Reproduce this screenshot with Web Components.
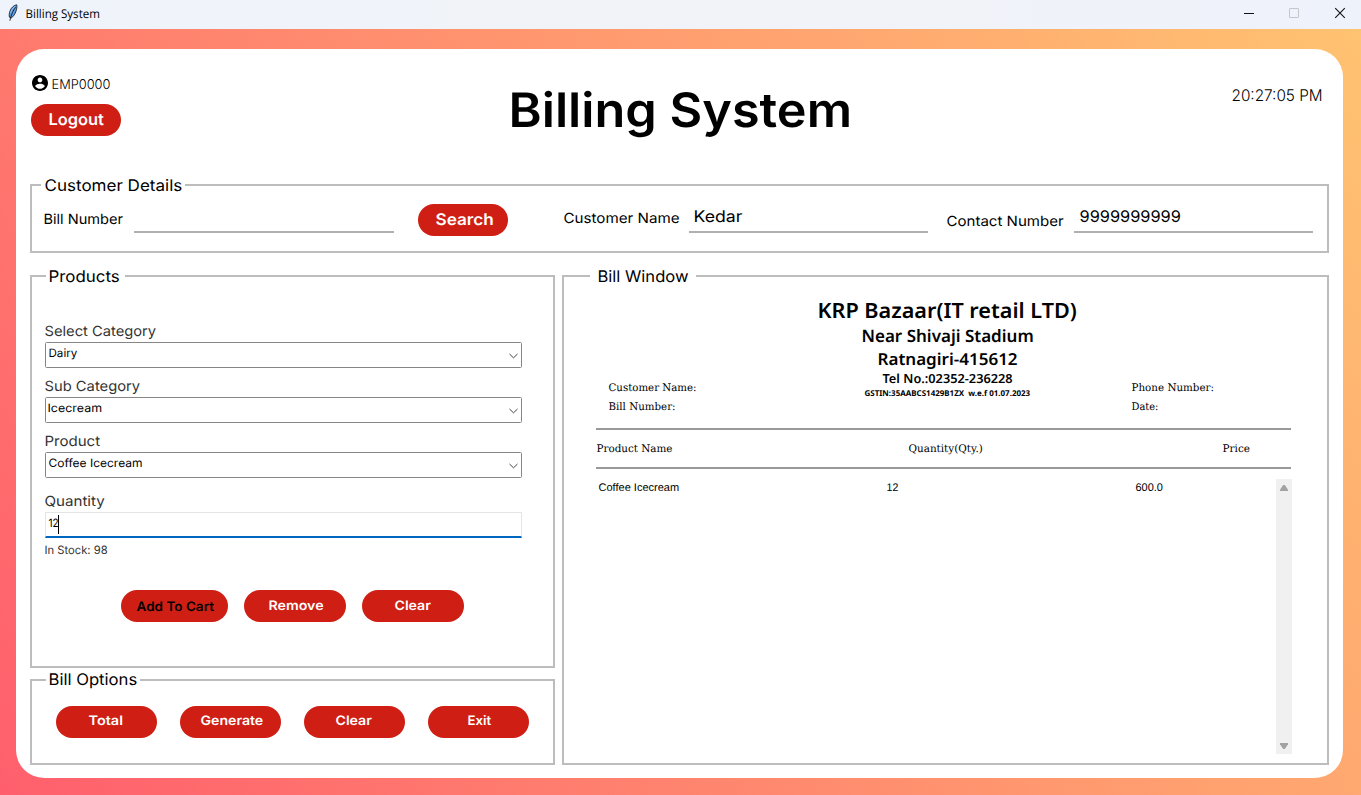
<!DOCTYPE html>
<html lang="en">
<head>
<meta charset="utf-8">
<title>Billing System</title>
<style>
html,body{margin:0;padding:0;width:1361px;height:795px;overflow:hidden;font-family:Inter,"Open Sans",sans-serif;color:#000}
</style>
</head>
<body>
<app-window></app-window>
<script>
const ctx = document.createElement('canvas').getContext('2d');
const FONTS = {
  ui: 'Inter, "Open Sans", sans-serif',
  system: '"Open Sans", sans-serif',
  print: '"Noto Sans", sans-serif',
  slab: '"DejaVu Serif", serif',
  arial: '"Liberation Sans", sans-serif'
};
const LOWERED = [8, 11, 13, 13.5, 14, 21, 47.5];

function shadow(el, html) {
  el.attachShadow({ mode: 'open' }).innerHTML = html;
}

/* A single line of text, stretched to fill the width given in "w". */
class FitLabel extends HTMLElement {
  connectedCallback() {
    if (this.shadowRoot) return;
    const get = (k, d) => this.getAttribute(k) || d;
    const w = +get('w', 100), size = +get('size', 14), weight = get('weight', '400');
    const lh = get('lh', '20'), family = FONTS[get('face', 'ui')];
    const text = this.textContent;
    ctx.font = `${weight} ${size * 10}px ${family}`;
    const m = ctx.measureText(text);
    const left = m.actualBoundingBoxLeft / 10;
    const scale = (w - .5) / (left + m.actualBoundingBoxRight / 10);
    const dy = LOWERED.includes(size) ? 1 : 0;
    shadow(this, `<style>
      :host{display:block;flex:none;width:${w}px;height:${lh}px;
        font:${weight} ${size}px/${lh}px ${family};white-space:pre;text-rendering:geometricPrecision}
      span{display:block;width:max-content;margin-left:${(left * scale).toFixed(2)}px;
        transform:translate(.5px,${dy}px) scaleX(${scale.toFixed(4)});transform-origin:0 0}
    </style><span><slot></slot></span>`);
  }
}

class PillButton extends HTMLElement {
  connectedCallback() {
    if (this.shadowRoot) return;
    shadow(this, `<style>
      :host{display:block;flex:none;box-sizing:border-box;width:${this.getAttribute('width')}px;height:32px;
        border-radius:16px;background:#cf1f15;color:#fff;
        padding:${this.getAttribute('ty')}px 0 0 ${this.getAttribute('tx')}px;cursor:pointer}
    </style><slot></slot>`);
  }
}

class GroupBox extends HTMLElement {
  connectedCallback() {
    if (this.shadowRoot) return;
    shadow(this, `<style>
      :host{display:block;flex:none;box-sizing:border-box;border:2px solid #bdbdbd}
      .legend{box-sizing:border-box;height:20px;background:#fff;width:var(--gap);
        margin:var(--rise,-11px) 0 0 var(--start);padding-left:var(--inset)}
    </style><div class="legend"><slot name="legend"></slot></div><slot></slot>`);
  }
}

class LineField extends HTMLElement {
  connectedCallback() {
    if (this.shadowRoot) return;
    shadow(this, `<style>
      :host{display:block;flex:none;box-sizing:border-box;height:37px;border-bottom:2px solid #b0b0b0;padding:10px 0 0 5.5px}
    </style><slot></slot>`);
  }
}

class ComboBox extends HTMLElement {
  connectedCallback() {
    if (this.shadowRoot) return;
    shadow(this, `<style>
      :host{display:flex;justify-content:space-between;box-sizing:border-box;width:477px;height:26px;
        border:1px solid #868686;border-radius:1.5px;padding:0 3.5px 0 2.5px}
      svg{display:block;margin-top:10px}
    </style><slot></slot>
    <svg width="9" height="6" viewBox="0 0 9 6"><path d="M.5 1 4.500 4.800 8.500 1" fill="none" stroke="#444" stroke-width="1"/></svg>`);
  }
}

class QuantityEntry extends HTMLElement {
  connectedCallback() {
    if (this.shadowRoot) return;
    shadow(this, `<style>
      :host{display:flex;box-sizing:border-box;width:477px;height:26px;border:1px solid #e5e5e5;
        border-bottom:2px solid #0067c0;padding-left:2.5px}
      i{display:block;width:1px;height:19px;background:#000;margin:2px 0 0}
    </style><slot></slot><i></i>`);
  }
}

class TitleBar extends HTMLElement {
  connectedCallback() {
    if (this.shadowRoot) return;
    shadow(this, `<style>
      :host{display:flex;height:29px;background:linear-gradient(90deg,#eff3fb,#f1f3f8 45%,#f1f3f8 65%,#eef2fb);box-sizing:border-box}
      .feather{margin:4px 0 0 7px}
      fit-label{margin:4px 0 0 8.500px}
      .controls{display:flex;margin:7px 15px 0 auto;gap:33px}
      .controls .max{margin-right:1px}
      svg{display:block}
    </style>
    <svg class="feather" width="11" height="18" viewBox="0 0 11 18">
      <path d="M9.700.8C7.200 1 4.200 3.600 3 7c-.9 2.600-1 4.700-.5 6.300L4.200 14C6.200 12.800 8.100 10 9 7.200 9.700 5 10.200 2.500 9.700.8Z" fill="#5b9be0" stroke="#17222f" stroke-width=".9"/>
      <path d="M8.200 2.200C6 3.600 4.200 6.200 3.500 9" fill="none" stroke="#a9cdf3" stroke-width=".8"/>
      <path d="M8.600 3.200C6.200 6.500 4.400 10 2.900 16.700" fill="none" stroke="#0d1520" stroke-width=".9"/>
    </svg>
    <fit-label face="system" size="12" w="73">Billing System</fit-label>
    <div class="controls">
      <svg width="12" height="12"><path d="M1 6.500H11" stroke="#111"/></svg>
      <svg class="max" width="12" height="12"><rect x="1.500" y="1.500" width="9" height="9" rx=".5" fill="none" stroke="#c3c6cb"/></svg>
      <svg width="12" height="12"><path d="M1.200 1.200 10.800 10.800M10.800 1.200 1.200 10.800" stroke="#111" stroke-width="1.100"/></svg>
    </div>`);
  }
}

class PageHeader extends HTMLElement {
  connectedCallback() {
    if (this.shadowRoot) return;
    shadow(this, `<style>
      :host{display:flex;height:135px}
      .account{width:495px}
      .user{display:flex;height:16px;margin:26px 0 13px 16px}
      .user fit-label{margin:-1px 0 0 4.500px}
      .title{margin-top:31px}
      .clock{margin:36px 0 0 383px}
      pill-button{margin-left:15px}
    </style>
    <div class="account">
      <div class="user">
        <svg width="16" height="16" viewBox="2 2 20 20"><path d="M12 2C6.480 2 2 6.480 2 12s4.480 10 10 10 10-4.480 10-10S17.520 2 12 2zm0 3.200c1.660 0 2.900 1.240 2.900 2.900s-1.240 2.900-2.900 2.900-2.900-1.240-2.900-2.900 1.240-2.900 2.900-2.900zm0 14.100c-2.500 0-4.710-1.280-6-3.220.03-1.990 4-3.080 6-3.080 1.990 0 5.970 1.090 6 3.080-1.290 1.940-3.500 3.220-6 3.220z"/></svg>
        <fit-label size="13.500" weight="350" w="57.500">EMP0000</fit-label>
      </div>
      <pill-button width="90" tx="18.500" ty="5"><fit-label size="16" weight="600" w="54.500">Logout</fit-label></pill-button>
    </div>
    <fit-label class="title" size="47.500" weight="600" w="338" lh="60">Billing System</fit-label>
    <fit-label class="clock" size="16" weight="300" w="89">20:27:05 PM</fit-label>`);
  }
}

class CustomerDetails extends HTMLElement {
  connectedCallback() {
    if (this.shadowRoot) return;
    shadow(this, `<style>
      :host{display:block;margin:0 14px}
      group-box{height:69px;--start:9px;--gap:144px;--inset:3.500px}
      .row{display:flex;align-items:flex-start;padding-top:1px}
    </style>
    <group-box>
      <fit-label slot="legend" size="16" w="136.500">Customer Details</fit-label>
      <div class="row">
        <fit-label size="14" w="78.500" style="margin:13px 0 0 12.500px">Bill Number</fit-label>
        <line-field style="width:260px;margin-left:11px"></line-field>
        <pill-button width="90" tx="18" ty="5" style="margin:8px 0 0 24px"><fit-label size="16" weight="600" w="57">Search</fit-label></pill-button>
        <fit-label size="14" w="115" style="margin:12px 0 0 55.500px">Customer Name</fit-label>
        <line-field style="width:239px;margin-left:10.500px"><fit-label size="16" w="47.500">Kedar</fit-label></line-field>
        <fit-label size="14" w="116.500" style="margin:15px 0 0 19px">Contact Number</fit-label>
        <line-field style="width:239px;margin-left:10.500px"><fit-label size="16" w="100">9999999999</fit-label></line-field>
      </div>
    </group-box>`);
  }
}

class ProductsPanel extends HTMLElement {
  connectedCallback() {
    if (this.shadowRoot) return;
    shadow(this, `<style>
      :host{display:block}
      group-box{height:393px;--start:14px;--gap:79px;--inset:3px}
      .form{padding:35px 0 0 13px}
      .name{color:#333;margin-bottom:1px}
      .name ~ .name{margin-top:8px}
      .form > .qty.name{margin-top:13px}
      .stock{color:#333;margin-top:2px}
      .actions{display:flex;gap:16px;margin:30px 0 0 76px}
      .dark{color:#000}
    </style>
    <group-box>
      <fit-label slot="legend" size="16" w="69.500">Products</fit-label>
      <div class="form">
        <fit-label class="name" size="14" w="111">Select Category</fit-label>
        <combo-box><fit-label size="11.500" w="28">Dairy</fit-label></combo-box>
        <fit-label class="name" size="14" w="95">Sub Category</fit-label>
        <combo-box><fit-label size="11.500" w="53">Icecream</fit-label></combo-box>
        <fit-label class="name" size="14" w="54.500">Product</fit-label>
        <combo-box><fit-label size="11.500" w="93">Coffee Icecream</fit-label></combo-box>
        <fit-label class="name qty" size="14" w="59.500">Quantity</fit-label>
        <quantity-entry><fit-label size="11.500" w="9.500">12</fit-label></quantity-entry>
        <fit-label class="stock" size="11.500" w="62">In Stock: 98</fit-label>
        <div class="actions">
          <pill-button width="107" tx="15.500" ty="6"><fit-label class="dark" size="13" weight="600" w="77.500">Add To Cart</fit-label></pill-button>
          <pill-button width="102" tx="25" ty="5"><fit-label size="13" weight="600" w="54">Remove</fit-label></pill-button>
          <pill-button width="102" tx="33" ty="5"><fit-label size="13" weight="600" w="36">Clear</fit-label></pill-button>
        </div>
      </div>
    </group-box>`);
  }
}

class BillOptions extends HTMLElement {
  connectedCallback() {
    if (this.shadowRoot) return;
    shadow(this, `<style>
      :host{display:block;margin-top:11px}
      group-box{height:86px;--start:14px;--gap:94px;--inset:3.500px;--rise:-12px}
      .row{display:flex;gap:23px;margin:17px 0 0 24px}
    </style>
    <group-box>
      <fit-label slot="legend" size="16" w="87">Bill Options</fit-label>
      <div class="row">
        <pill-button width="101" tx="33" ty="4"><fit-label size="13" weight="600" w="33.500">Total</fit-label></pill-button>
        <pill-button width="101" tx="21" ty="4"><fit-label size="13" weight="600" w="62">Generate</fit-label></pill-button>
        <pill-button width="101" tx="32" ty="4"><fit-label size="13" weight="600" w="36">Clear</fit-label></pill-button>
        <pill-button width="101" tx="40" ty="4"><fit-label size="13" weight="600" w="23">Exit</fit-label></pill-button>
      </div>
    </group-box>`);
  }
}

class ScrollTrack extends HTMLElement {
  connectedCallback() {
    if (this.shadowRoot) return;
    shadow(this, `<style>
      :host{display:flex;flex-direction:column;justify-content:space-between;align-items:center;box-sizing:border-box;
        width:16px;height:275px;background:#f0f0f0;padding:6px 0 5px}
      svg{display:block}
    </style>
    <svg width="8" height="6"><path d="M3.200 0H4.800L8 4.800V6H0V4.800Z" fill="#a2a2a2"/></svg>
    <svg width="8" height="6"><path d="M3.200 6H4.800L8 1.200V0H0V1.200Z" fill="#a2a2a2"/></svg>`);
  }
}

class BillWindow extends HTMLElement {
  connectedCallback() {
    if (this.shadowRoot) return;
    shadow(this, `<style>
      :host{display:block;width:767px}
      group-box{height:490px;--start:26px;--gap:106px;--inset:8.500px}
      .head{display:flex;height:142px}
      .left{width:210px;padding:93px 0 0 44.500px;box-sizing:border-box;margin-right:45px}
      .shop{width:257px;display:flex;flex-direction:column;align-items:center;padding-top:11px}
      .right{padding:93px 0 0 55px}
      .rule{width:695px;height:2px;margin-left:32px;background:#999}
      .cols{display:flex;height:37px;padding:9px 0 0 32px;box-sizing:border-box}
      .body{display:flex;padding-left:34px;align-items:flex-start}
      .body fit-label{margin-top:8px}
    </style>
    <group-box>
      <fit-label slot="legend" size="16" w="89.500">Bill Window</fit-label>
      <div class="head">
        <div class="left">
          <fit-label face="slab" size="10.500" lh="19" w="87">Customer Name:</fit-label>
          <fit-label face="slab" size="10.500" lh="19" w="66">Bill Number:</fit-label>
        </div>
        <div class="shop">
          <fit-label face="print" size="21" weight="600" lh="26" w="257">KRP Bazaar(IT retail LTD)</fit-label>
          <fit-label face="print" size="17" weight="600" lh="24" w="170" style="margin-top:1px">Near Shivaji Stadium</fit-label>
          <fit-label face="print" size="16.500" weight="600" lh="22" w="138.500">Ratnagiri-415612</fit-label>
          <fit-label face="print" size="12.500" weight="600" lh="17" w="130">Tel No.:02352-236228</fit-label>
          <fit-label face="print" size="8" weight="700" lh="12" w="165.500">GSTIN:35AABCS1429B1ZX  w.e.f 01.07.2023</fit-label>
        </div>
        <div class="right">
          <fit-label face="slab" size="10.500" lh="19" w="81.500">Phone Number:</fit-label>
          <fit-label face="slab" size="10.500" lh="19" w="26">Date:</fit-label>
        </div>
      </div>
      <div class="rule"></div>
      <div class="cols">
        <fit-label face="slab" size="10.500" w="75.500">Product Name</fit-label>
        <fit-label face="slab" size="10.500" w="73.500" style="margin-left:237px">Quantity(Qty.)</fit-label>
        <fit-label face="slab" size="10.500" w="27" style="margin-left:240px">Price</fit-label>
      </div>
      <div class="rule"></div>
      <div class="body">
        <fit-label face="arial" size="11" w="80">Coffee Icecream</fit-label>
        <fit-label face="arial" size="11" w="11" style="margin-left:209px">12</fit-label>
        <fit-label face="arial" size="11" w="27" style="margin-left:237px">600.0</fit-label>
        <scroll-track style="margin:10px 0 0 114px"></scroll-track>
      </div>
    </group-box>`);
  }
}

class AppWindow extends HTMLElement {
  connectedCallback() {
    if (this.shadowRoot) return;
    shadow(this, `<style>
      :host{display:block;width:1361px;height:795px;overflow:hidden}
      .stage{box-sizing:border-box;height:766px;padding:20px 18px 17px 16px;background:linear-gradient(57deg,#ff5f6d,#ffc371)}
      .card{height:729px;border-radius:28px;background:#fff;overflow:hidden}
      .main{display:flex;gap:7px;margin:22px 14px 0}
      .side{width:525px}
    </style>
    <title-bar></title-bar>
    <div class="stage"><div class="card">
      <page-header></page-header>
      <customer-details></customer-details>
      <div class="main">
        <div class="side"><products-panel></products-panel><bill-options></bill-options></div>
        <bill-window></bill-window>
      </div>
    </div></div>`);
  }
}

for (const [name, cls] of Object.entries({
  'fit-label': FitLabel, 'pill-button': PillButton, 'group-box': GroupBox, 'line-field': LineField,
  'combo-box': ComboBox, 'quantity-entry': QuantityEntry, 'title-bar': TitleBar, 'page-header': PageHeader,
  'customer-details': CustomerDetails, 'products-panel': ProductsPanel, 'bill-options': BillOptions,
  'scroll-track': ScrollTrack, 'bill-window': BillWindow, 'app-window': AppWindow
})) customElements.define(name, cls);
</script>
</body>
</html>
